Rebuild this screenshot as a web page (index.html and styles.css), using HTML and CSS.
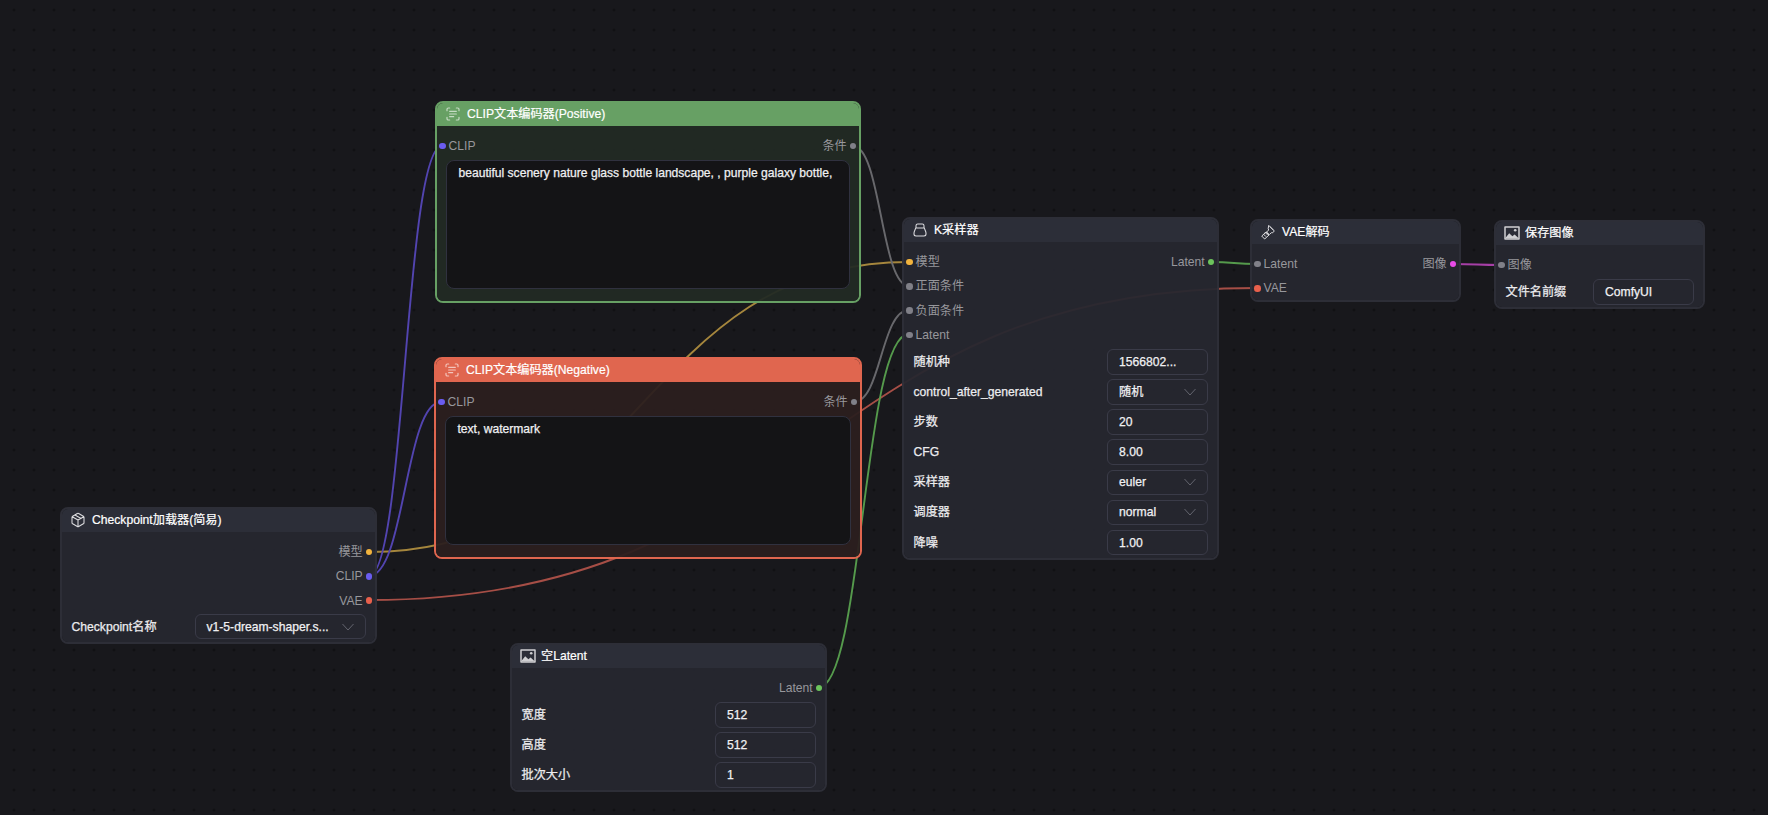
FILE: index.html
```html
<!DOCTYPE html>
<html lang="zh">
<head>
<meta charset="utf-8">
<title>ComfyUI</title>
<link rel="stylesheet" href="styles.css">
</head>
<body>
<main class="canvas">
  <svg class="links" width="1768" height="815" viewBox="0 0 1768 815" fill="none">
    <path class="l-model" d="M369 552C639 552 639 262 909 262"/>
    <path class="l-clip" d="M369 576C405 576 405 146 442 146"/>
    <path class="l-clip" d="M369 576C405 576 405 402 441 402"/>
    <path class="l-vae" d="M369 600C813 600 813 288 1257 288"/>
    <path class="l-cond" d="M853 146C881 146 881 286 909 286"/>
    <path class="l-cond" d="M854 402C881 402 881 310 909 310"/>
    <path class="l-latent" d="M818 688C863 688 863 334 909 334"/>
    <path class="l-latent" d="M1211 262C1234 262 1234 264 1257 264"/>
    <path class="l-image" d="M1453 264C1477 264 1477 265 1501 265"/>
  </svg>

  <section class="node n-pos tint-green">
    <header class="head"><svg class="ico ico-dim" viewBox="0 0 24 24"><path d="M3 7V5a2 2 0 0 1 2-2h2M17 3h2a2 2 0 0 1 2 2v2M21 17v2a2 2 0 0 1-2 2h-2M7 21H5a2 2 0 0 1-2-2v-2M7 8h10M7 12h10M7 16h6"/></svg><span>CLIP文本编码器(Positive)</span></header>
    <div class="body">
      <div class="row"><span class="slot"><i class="dot clip"></i>CLIP</span><span class="slot out">条件<i class="dot gray"></i></span></div>
      <div class="prompt">beautiful scenery nature glass bottle landscape, , purple galaxy bottle,</div>
    </div>
  </section>

  <section class="node n-neg tint-red">
    <header class="head"><svg class="ico ico-dim" viewBox="0 0 24 24"><path d="M3 7V5a2 2 0 0 1 2-2h2M17 3h2a2 2 0 0 1 2 2v2M21 17v2a2 2 0 0 1-2 2h-2M7 21H5a2 2 0 0 1-2-2v-2M7 8h10M7 12h10M7 16h6"/></svg><span>CLIP文本编码器(Negative)</span></header>
    <div class="body">
      <div class="row"><span class="slot"><i class="dot clip"></i>CLIP</span><span class="slot out">条件<i class="dot gray"></i></span></div>
      <div class="prompt">text, watermark</div>
    </div>
  </section>

  <section class="node n-ckpt">
    <header class="head"><svg class="ico" viewBox="0 0 24 24"><path d="M21 8a2 2 0 0 0-1-1.730l-7-4a2 2 0 0 0-2 0l-7 4A2 2 0 0 0 3 8v8a2 2 0 0 0 1 1.730l7 4a2 2 0 0 0 2 0l7-4a2 2 0 0 0 1-1.730ZM3.300 7l8.700 5 8.700-5M12 22V12M7.500 4.500l9 5.200"/></svg><span>Checkpoint加载器(简易)</span></header>
    <div class="body">
      <div class="row end"><span class="slot out">模型<i class="dot model"></i></span></div>
      <div class="row end"><span class="slot out">CLIP<i class="dot clip"></i></span></div>
      <div class="row end"><span class="slot out">VAE<i class="dot vae"></i></span></div>
      <div class="widget wide"><label>Checkpoint名称</label><div class="field select"><span>v1-5-dream-shaper.s...</span><svg class="chev" viewBox="0 0 12 8"><path d="M.5 1l5.500 6 5.500-6"/></svg></div></div>
    </div>
  </section>

  <section class="node n-latent">
    <header class="head"><svg class="ico ico-img" viewBox="0 0 16 14"><path class="frame" d="M1 1h14v12H1z"/><circle class="fill" cx="11.200" cy="4.200" r="1.300"/><path class="fill" d="M1 12.600l4.200-5.400 3.200 3 2.200-1.800 4.400 4.200z"/></svg><span>空Latent</span></header>
    <div class="body">
      <div class="row end"><span class="slot out">Latent<i class="dot latent"></i></span></div>
      <div class="widgets">
        <div class="widget"><label>宽度</label><div class="field">512</div></div>
        <div class="widget"><label>高度</label><div class="field">512</div></div>
        <div class="widget"><label>批次大小</label><div class="field">1</div></div>
      </div>
    </div>
  </section>

  <section class="node n-ksampler">
    <header class="head"><svg class="ico" viewBox="0 0 24 24"><path d="M8.500 3h7A2.500 2.500 0 0 1 18 5.500V8l2.200 5.600c.5 1.200.8 2.100.8 3.100v1.300a3 3 0 0 1-3 3H6a3 3 0 0 1-3-3v-1.300c0-1 .3-1.900.8-3.100L6 8V5.500A2.500 2.500 0 0 1 8.500 3ZM6 9h12"/></svg><span>K采样器</span></header>
    <div class="body">
      <div class="row"><span class="slot"><i class="dot model"></i>模型</span><span class="slot out">Latent<i class="dot latent"></i></span></div>
      <div class="row"><span class="slot"><i class="dot gray"></i>正面条件</span></div>
      <div class="row"><span class="slot"><i class="dot gray"></i>负面条件</span></div>
      <div class="row"><span class="slot"><i class="dot gray"></i>Latent</span></div>
      <div class="widgets">
        <div class="widget"><label>随机种</label><div class="field">1566802...</div></div>
        <div class="widget"><label>control_after_generated</label><div class="field select"><span>随机</span><svg class="chev" viewBox="0 0 12 8"><path d="M.5 1l5.500 6 5.500-6"/></svg></div></div>
        <div class="widget"><label>步数</label><div class="field">20</div></div>
        <div class="widget"><label>CFG</label><div class="field">8.00</div></div>
        <div class="widget"><label>采样器</label><div class="field select"><span>euler</span><svg class="chev" viewBox="0 0 12 8"><path d="M.5 1l5.500 6 5.500-6"/></svg></div></div>
        <div class="widget"><label>调度器</label><div class="field select"><span>normal</span><svg class="chev" viewBox="0 0 12 8"><path d="M.5 1l5.500 6 5.500-6"/></svg></div></div>
        <div class="widget"><label>降噪</label><div class="field">1.00</div></div>
      </div>
    </div>
  </section>

  <section class="node n-vae">
    <header class="head"><svg class="ico ico-brush" viewBox="0 0 24 24"><path d="M13.500 2.500l8 8-3 3-1.500-.5-3 3-4-4 3-3-.5-1.500ZM9.500 12.500l4 4-6.500 6-4-4ZM5.500 15.500l3 3M8 13l3 3M15.500 4.500l4 4"/></svg><span>VAE解码</span></header>
    <div class="body">
      <div class="row"><span class="slot"><i class="dot gray"></i>Latent</span><span class="slot out">图像<i class="dot image"></i></span></div>
      <div class="row"><span class="slot"><i class="dot vae"></i>VAE</span></div>
    </div>
  </section>

  <section class="node n-save">
    <header class="head"><svg class="ico ico-img" viewBox="0 0 16 14"><path class="frame" d="M1 1h14v12H1z"/><circle class="fill" cx="11.200" cy="4.200" r="1.300"/><path class="fill" d="M1 12.600l4.200-5.400 3.200 3 2.200-1.800 4.400 4.200z"/></svg><span>保存图像</span></header>
    <div class="body">
      <div class="row"><span class="slot"><i class="dot gray"></i>图像</span></div>
      <div class="widget tight"><label>文件名前缀</label><div class="field">ComfyUI</div></div>
    </div>
  </section>
</main>
</body>
</html>
```

FILE: styles.css
```css
* { box-sizing: border-box; }

html, body {
  margin: 0;
  height: 100%;
  overflow: hidden;
}

body {
  background: #18181c;
  font-family: "Liberation Sans", "Noto Sans CJK SC", sans-serif;
  font-size: 12.15px;
  line-height: 14px;
  color: #f0f0f2;
}

.canvas {
  position: relative;
  width: 1768px;
  height: 815px;
  overflow: hidden;
  background-color: #18181c;
  background-image: radial-gradient(circle at 1.5px 1.5px, #0f0f11 1px, transparent 1.4px);
  background-size: 20px 20px;
  background-position: 12.5px 8.5px;
}

/* links */
.links { position: absolute; left: 0; top: 0; }
.links path { stroke-width: 1.9; }
.l-model { stroke: #a5863d; }
.l-clip { stroke: #5244b0; }
.l-vae { stroke: #a64e46; }
.l-cond { stroke: #68686c; }
.l-latent { stroke: #559a4c; }
.l-image { stroke: #a63fa6; }

/* node frames */
.node {
  position: absolute;
  display: flex;
  flex-direction: column;
  border-radius: 8px;
  overflow: hidden;
  border: 2px solid rgba(46, 47, 57, .97);
}
.n-pos { left: 435px; top: 101px; width: 426px; height: 202px; }
.n-neg { left: 434px; top: 357px; width: 428px; height: 202px; }
.n-ckpt { left: 60px; top: 507px; width: 317px; height: 137px; }
.n-latent { left: 510px; top: 643px; width: 317px; height: 149px; }
.n-ksampler { left: 902px; top: 217px; width: 317px; height: 343px; }
.n-vae { left: 1250px; top: 219px; width: 211px; height: 83px; }
.n-save { left: 1494px; top: 220px; width: 211px; height: 89px; }

.tint-green { border-color: #67a064; }
.tint-red { border-color: #e0664f; }

.head {
  flex: none;
  height: 23px;
  display: flex;
  align-items: center;
  gap: 6px;
  padding: 0 0 1px 8px;
  background: rgba(45, 47, 58, .97);
  color: #fff;
  -webkit-text-stroke: .2px #fff;
}
.tint-green .head { background: #67a064; }
.tint-red .head { background: #e0664f; }

.body {
  flex: 1;
  display: flex;
  flex-direction: column;
  padding: 8px 0 0;
  background: rgba(38, 39, 47, .95);
}
.tint-green .body { background: rgba(34, 42, 36, .95); }
.tint-red .body { background: rgba(43, 31, 31, .95); }

/* header icons */
.ico {
  flex: none;
  width: 16px;
  height: 16px;
  fill: none;
  stroke: #dcdcdf;
  stroke-width: 1.6;
  stroke-linecap: round;
  stroke-linejoin: round;
}
.ico-dim { stroke: rgba(255, 255, 255, .62); stroke-width: 1.8; }
.ico-brush { stroke-width: 1.5; }
.ico-img { height: 14px; margin-right: -1px; }
.ico-img .frame { stroke: #cfcfd2; stroke-width: 1.5; }
.ico-img .fill { fill: #cfcfd2; stroke: none; }

/* slot rows */
.row {
  flex: none;
  height: 24.3px;
  display: flex;
  align-items: center;
  justify-content: space-between;
  padding: 0 2px;
}
.row.end { justify-content: flex-end; }

.slot {
  display: flex;
  align-items: center;
  gap: 3px;
  color: #97979c;
}
.slot.out { margin-right: .8px; }

.dot {
  flex: none;
  width: 6.5px;
  height: 6.5px;
  border-radius: 50%;
}
.dot.clip { background: #6a5cf0; }
.dot.gray { background: #808088; }
.dot.model { background: #f2b33d; }
.dot.vae { background: #e8604c; }
.dot.latent { background: #6cc45c; }
.dot.image { background: #e84be8; }

/* prompt */
.prompt {
  flex: 1;
  margin: 2px 9.2px 11.8px;
  padding: 3.7px 11.3px;
  border: 1px solid #30313f;
  border-radius: 8px;
  background: #141416;
  color: #f0f0f2;
  font-size: 12.1px;
  line-height: 16px;
  -webkit-text-stroke: .25px #f0f0f2;
}

/* widgets */
.widgets {
  display: flex;
  flex-direction: column;
  gap: 4.6px;
  margin-top: 2px;
}
.widget {
  flex: none;
  height: 25.5px;
  display: flex;
  align-items: center;
  justify-content: space-between;
  padding: 0 9.5px;
}
.widget.wide { margin-top: 1px; }
.widget.wide .field { width: 171px; }
.widget.tight { margin-top: 2px; }

.widget label {
  color: #ececee;
  -webkit-text-stroke: .25px #ececee;
}

.field {
  flex: none;
  width: 100.5px;
  height: 25.5px;
  display: flex;
  align-items: center;
  justify-content: space-between;
  padding: 0 11px;
  border: 1px solid #3a3b48;
  border-radius: 6px;
  color: #f0f0f2;
  -webkit-text-stroke: .25px #f0f0f2;
  white-space: nowrap;
}
.chev {
  flex: none;
  width: 12px;
  height: 8px;
  fill: none;
  stroke: #63646e;
  stroke-width: 1;
}
```
